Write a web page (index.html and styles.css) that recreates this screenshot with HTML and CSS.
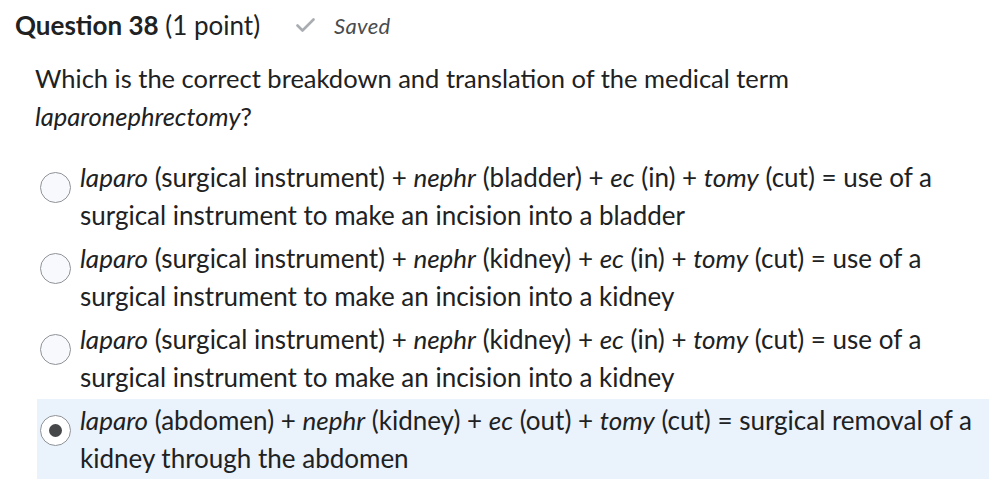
FILE: index.html
```html
<!DOCTYPE html>
<html>
<head>
<meta charset="utf-8">
<link rel="stylesheet" href="styles.css">
</head>
<body>
<div class="page">
  <div class="header">
    <h2 class="title"><b>Question 38</b> <span class="pts">(1 point)</span></h2>
    <span class="saved">
      <svg class="check" width="19" height="14" viewBox="0 0 19 14"><path d="M1.5 7.5 L6.5 12.5 L17.5 1.5" fill="none" stroke="#a9adb1" stroke-width="2.6" stroke-linecap="round" stroke-linejoin="round"/></svg>
      <i>Saved</i>
    </span>
  </div>
  <p class="question">Which is the correct breakdown and translation of the medical term <i>laparonephrectomy</i>?</p>
  <div class="options">
    <label class="option">
      <span class="radio"></span>
      <span class="text"><i>laparo</i> (surgical instrument) + <i>nephr</i> (bladder) + <i>ec</i> (in) + <i>tomy</i> (cut) = use of a surgical instrument to make an incision into a bladder</span>
    </label>
    <label class="option">
      <span class="radio"></span>
      <span class="text"><i>laparo</i> (surgical instrument) + <i>nephr</i> (kidney) + <i>ec</i> (in) + <i>tomy</i> (cut) = use of a surgical instrument to make an incision into a kidney</span>
    </label>
    <label class="option">
      <span class="radio"></span>
      <span class="text"><i>laparo</i> (surgical instrument) + <i>nephr</i> (kidney) + <i>ec</i> (in) + <i>tomy</i> (cut) = use of a surgical instrument to make an incision into a kidney</span>
    </label>
    <label class="option selected">
      <span class="radio checked"></span>
      <span class="text"><i>laparo</i> (abdomen) + <i>nephr</i> (kidney) + <i>ec</i> (out) + <i>tomy</i> (cut) = surgical removal of a kidney through the abdomen</span>
    </label>
  </div>
</div>
</body>
</html>
```

FILE: styles.css
```css
* { box-sizing: border-box; }
html, body {
  margin: 0;
  padding: 0;
  background: #ffffff;
}
body {
  font-family: Lato, "Noto Sans", sans-serif;
  color: #202122;
  width: 1000px;
  height: 495px;
  overflow: hidden;
}
.page {
  padding: 7px 0 0 15px;
}
.header {
  display: flex;
  align-items: center;
  height: 36px;
}
.title {
  margin: 0;
  font-size: 26px;
  font-weight: 400;
  line-height: 36px;
}
.title b { font-weight: 700; }
.saved {
  display: flex;
  align-items: center;
  margin-left: 36px;
  color: #494c4e;
  font-size: 22px;
  letter-spacing: 0.3px;
}
.check { margin-right: 19px; }
.question {
  margin: 16px 0 0 20px;
  font-size: 25.5px;
  line-height: 38px;
  width: 800px;
}
.options {
  margin: 21px 0 0 22px;
  width: 952px;
  display: flex;
  flex-direction: column;
  gap: 1px;
}
.option {
  display: flex;
  align-items: flex-start;
  padding: 2px 8px 2px 3px;
  font-size: 26px;
  line-height: 38px;
}
.option.selected {
  background: #eaf2fc;
}
.radio {
  flex: none;
  width: 31px;
  height: 31px;
  border: 1.5px solid #8f9397;
  border-radius: 50%;
  background: #f8f9fd;
  margin-top: 14px;
  margin-right: 9px;
  display: flex;
  align-items: center;
  justify-content: center;
}
.radio.checked {
  background: #ffffff;
}
.radio.checked::after {
  content: "";
  width: 13px;
  height: 13px;
  border-radius: 50%;
  background: #454748;
}
.text { flex: 1; }
```
